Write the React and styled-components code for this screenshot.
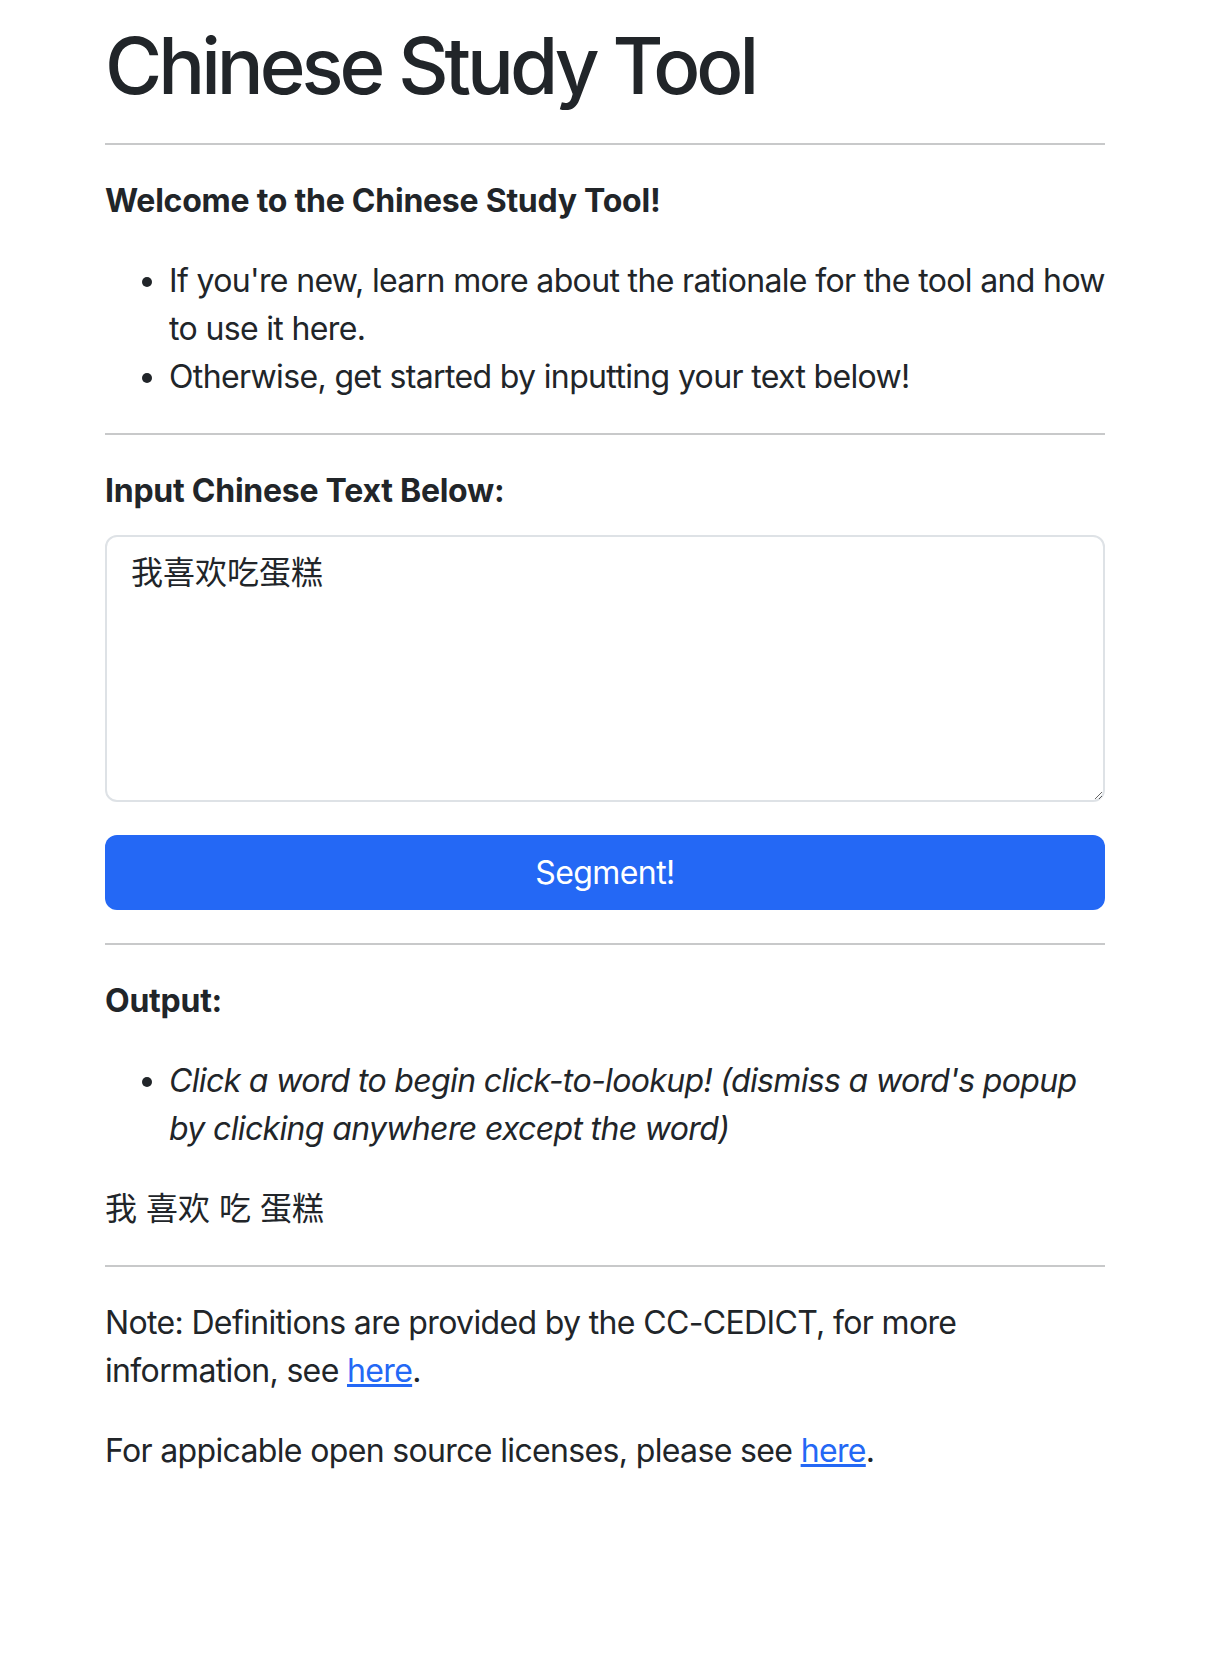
import React from "react";
import styled, { createGlobalStyle } from "styled-components";

const GlobalStyle = createGlobalStyle`
  body {
    margin: 0;
    background: #fff;
    color: #212529;
    font-family: Inter, "Noto Sans CJK SC", sans-serif;
  }
  * {
    box-sizing: border-box;
  }
`;

const words = ["我", "喜欢", "吃", "蛋糕"];

const App = () => {
  return (
    <>
      <GlobalStyle />
      <Page>
        <Title>Chinese Study Tool</Title>
        <Divider $first />

        <Heading>Welcome to the Chinese Study Tool!</Heading>
        <List>
          <li>
            If you're new, learn more about the rationale for the tool and how
            to use it here.
          </li>
          <li>Otherwise, get started by inputting your text below!</li>
        </List>
        <Divider />

        <Label htmlFor="chinese-input">Input Chinese Text Below:</Label>
        <TextInput id="chinese-input" defaultValue="我喜欢吃蛋糕" />
        <SegmentButton type="button">Segment!</SegmentButton>
        <Divider />

        <Heading>Output:</Heading>
        <List $italic>
          <li>
            Click a word to begin click-to-lookup! (dismiss a word's popup by
            clicking anywhere except the word)
          </li>
        </List>
        <Words>
          {words.map((w, i) => (
            <React.Fragment key={w}>
              <Word>{w}</Word>
              {i < words.length - 1 && " "}
            </React.Fragment>
          ))}
        </Words>
        <Divider />

        <Note>
          Note: Definitions are provided by the CC-CEDICT, for more
          information, see <Link href="#">here</Link>.
        </Note>
        <Note>
          For appicable open source licenses, please see{" "}
          <Link href="#">here</Link>.
        </Note>
      </Page>
    </>
  );
};

const Page = styled.main`
  width: 1000px;
  margin-left: 105px;
  padding: 18px 0 160px;
  font-size: 32px;
  line-height: 48px;
  letter-spacing: -0.65px;
`;

const Title = styled.h1`
  margin: 0;
  font-size: 78px;
  line-height: 96px;
  font-weight: 500;
  letter-spacing: -4px;
`;

const Divider = styled.hr`
  margin: ${(p) => (p.$first ? "29px" : "32px")} 0 0;
  border: 0;
  border-top: 2px solid #c8c9ca;

  & + * {
    margin-top: 32px;
  }
`;

const Heading = styled.p`
  margin: 32px 0 0;
  font-weight: 700;
  letter-spacing: -0.25px;
`;

const Label = styled.label`
  display: block;
  font-weight: 700;
  letter-spacing: -0.25px;
`;

const List = styled.ul`
  margin: 32px -8px 0 0;
  padding-left: 64px;
  font-style: ${(p) => (p.$italic ? "italic" : "normal")};
`;

const TextInput = styled.textarea`
  display: block;
  width: 100%;
  height: 267px;
  margin-top: 20px;
  padding: 12px 24px;
  border: 2px solid #dee2e6;
  border-radius: 12px;
  font-family: Inter, "Noto Sans CJK SC", sans-serif;
  font-size: 32px;
  line-height: 48px;
  color: #212529;
  background: #fff;
  resize: vertical;
  outline: none;
`;

const SegmentButton = styled.button`
  display: block;
  width: 100%;
  height: 75px;
  margin-top: 33px;
  padding: 12px 24px;
  border: 0;
  border-radius: 12px;
  background: #2468f5;
  color: #fff;
  font-family: Inter, sans-serif;
  font-size: 32px;
  line-height: 48px;
  letter-spacing: -0.6px;
  cursor: pointer;

  & + hr {
    margin-top: 33px;
  }
`;

const Words = styled.div`
  margin-top: 32px;
  letter-spacing: 0;
`;

const Word = styled.span`
  cursor: pointer;
`;

const Note = styled.p`
  margin: 32px 0 0;
`;

const Link = styled.a`
  color: #2468f5;
  text-decoration: underline;
`;

export default App;
